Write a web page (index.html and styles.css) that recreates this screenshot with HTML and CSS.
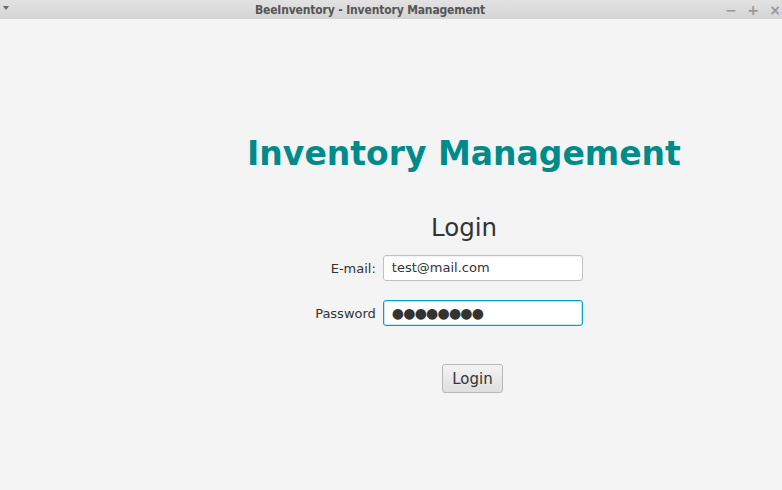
FILE: index.html
```html
<!DOCTYPE html>
<html>
<head>
<meta charset="utf-8">
<link rel="stylesheet" href="styles.css">
</head>
<body>
<div class="window">
  <div class="titlebar">
    <span class="menu-arrow"></span>
    <span class="title">BeeInventory - Inventory Management</span>
    <div class="controls">
      <span class="ctl">−</span>
      <span class="ctl">+</span>
      <span class="ctl">×</span>
    </div>
  </div>
  <div class="content">
    <h1 class="app-title">Inventory Management</h1>
    <h2 class="login-title">Login</h2>
    <div class="form">
      <label class="lbl">E-mail:</label>
      <div class="field">test@mail.com</div>
      <label class="lbl">Password</label>
      <div class="field focused">●●●●●●●●</div>
    </div>
    <button class="btn">Login</button>
  </div>
</div>
</body>
</html>
```
FILE: styles.css
```css
html, body {
  margin: 0;
  padding: 0;
  background: #f4f4f4;
  font-family: "DejaVu Sans", sans-serif;
}
.window {
  width: 782px;
  height: 490px;
  display: flex;
  flex-direction: column;
  overflow: hidden;
}
.titlebar {
  height: 19px;
  background: linear-gradient(#e2e2e2, #d4d4d4);
  display: flex;
  align-items: center;
  position: relative;
}
.menu-arrow {
  position: absolute;
  left: 3px;
  top: 6px;
  width: 0;
  height: 0;
  border-left: 3px solid transparent;
  border-right: 3px solid transparent;
  border-top: 4px solid #6a6a6a;
}
.title {
  flex: 1;
  text-align: center;
  font-family: "DejaVu Sans Condensed", "DejaVu Sans", sans-serif;
  font-weight: bold;
  font-size: 12px;
  color: #555;
  margin-left: -42px;
  letter-spacing: -0.15px;
}
.controls {
  position: absolute;
  right: -4px;
  top: 0;
  height: 19px;
  display: flex;
  align-items: center;
}
.ctl {
  width: 22px;
  text-align: center;
  color: #999;
  font-size: 14px;
  font-weight: bold;
}
.content {
  flex: 1;
  display: flex;
  flex-direction: column;
  align-items: center;
  padding-left: 146px;
}
.app-title {
  margin: 115px 0 0 0;
  font-size: 33px;
  line-height: 40px;
  font-weight: bold;
  color: #008b8b;
}
.login-title {
  margin: 39px 0 0 0;
  font-size: 24.5px;
  line-height: 30px;
  font-weight: normal;
  color: #333;
}
.form {
  margin: 12px 30px 0 0;
  display: grid;
  grid-template-columns: auto 200px;
  column-gap: 7px;
  row-gap: 19px;
  align-items: center;
}
.lbl {
  font-size: 13px;
  color: #333;
  text-align: right;
}
.field {
  box-sizing: border-box;
  height: 26px;
  border: 1px solid #c2c2c2;
  border-radius: 3px;
  background: #fff;
  padding: 0 8px;
  font-size: 13px;
  line-height: 24px;
  color: #333;
  box-shadow: inset 0 1px 1px rgba(0,0,0,0.06);
}
.field.focused {
  border-color: #039ed3;
  box-shadow: inset 0 0 0 1px #c3e6f4;
  font-size: 14px;
  letter-spacing: -0.8px;
}
.btn {
  margin: 38px 0 0 17px;
  box-sizing: border-box;
  width: 61px;
  height: 29px;
  border: 1px solid #b8b8b8;
  border-radius: 3px;
  background: linear-gradient(#f3f3f3, #dedede);
  font-family: "DejaVu Sans", sans-serif;
  font-size: 15px;
  color: #333;
  padding: 0;
}
```
